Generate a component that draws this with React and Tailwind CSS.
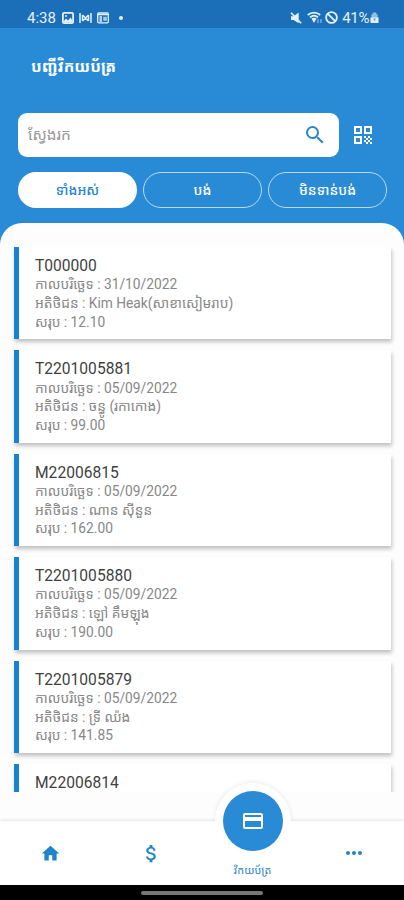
import React from 'react';
import { MdSearch, MdQrCode, MdHome, MdAttachMoney, MdPayment, MdMoreHoriz } from 'react-icons/md';

const invoices = [
  { id: 'T000000', date: '31/10/2022', customer: 'Kim Heak(សាខាសៀមរាប)', total: '12.10' },
  { id: 'T2201005881', date: '05/09/2022', customer: 'ចន្ធូ (រកាកោង)', total: '99.00' },
  { id: 'M22006815', date: '05/09/2022', customer: 'ណាន ស៊ីនួន', total: '162.00' },
  { id: 'T2201005880', date: '05/09/2022', customer: 'ឡៅ គឹមឡុង', total: '190.00' },
  { id: 'T2201005879', date: '05/09/2022', customer: 'ទ្រី ឈ៉ង', total: '141.85' },
  { id: 'M22006814' },
]

const StatusBar = () => (
  <div className="flex h-7 items-center bg-[#1a6fb8] pt-[7px] pr-[25px] pl-[27px] text-[#e4f1fb]">
    <span className="text-[15px] leading-5">4:38</span>
    <svg className="ml-[6px]" width="12" height="12" viewBox="0 0 12 12" fill="none" stroke="currentColor" strokeWidth="1.8">
      <rect x="0.9" y="0.9" width="10.2" height="10.2" rx="1.2" />
      <path d="M1.5 9.5l2.5-3 2 2 2.5-3 2 3v2h-9z" fill="currentColor" stroke="none" />
      <path d="M3 4h2" strokeWidth="1.3" />
    </svg>
    <svg className="ml-[5px]" width="13" height="12" viewBox="0 0 13 12" fill="none" stroke="currentColor" strokeWidth="1.5">
      <path d="M1 1v10M12 1v10M3.5 3v6M9.5 3v6M3.5 3l3 3 3-3M3.5 9l3-3 3 3" />
    </svg>
    <svg className="ml-[5px]" width="12" height="12" viewBox="0 0 12 12" fill="none" stroke="currentColor" strokeWidth="1.3">
      <rect x="0.7" y="1" width="10.6" height="9.8" rx="1" />
      <path d="M1 2.6h10M2.5 5h2.5M2.5 7h2.5M2.5 9h2.5" />
      <path d="M6.3 4.8h3.5v4H6.3z" fill="currentColor" stroke="none" opacity="0.7" />
    </svg>
    <div className="ml-[10px] h-1 w-1 rounded-full bg-[#e4f1fb]" />
    <svg className="ml-auto" width="12" height="12" viewBox="0 0 12 12" fill="currentColor">
      <path d="M1 4.2h2.7L8.7 0.5v10.8L3.7 8H1z" />
      <path d="M1 0.8l10.2 10.4" stroke="currentColor" strokeWidth="1.6" />
    </svg>
    <svg className="ml-[5px]" width="16" height="13" viewBox="0 0 16 13" fill="none" stroke="currentColor">
      <path d="M0.8 4C4.3 0.8 9.7 0.8 13.2 4" strokeWidth="1.8" />
      <path d="M3 6.4c2.4-2.2 5.6-2.2 8 0" strokeWidth="1.7" />
      <path d="M4.4 7.6L7 12l2.6-4.4C8 6.6 6 6.6 4.4 7.6z" fill="currentColor" stroke="none" />
      <path d="M11 8.2v4M14 12V8" strokeWidth="1.2" opacity="0.6" />
    </svg>
    <svg className="ml-[2px]" width="13" height="13" viewBox="0 0 13 13" fill="none" stroke="currentColor" strokeWidth="1.8">
      <circle cx="6.5" cy="6.5" r="5.4" />
      <path d="M2.8 2.8l7.4 7.4" />
    </svg>
    <span className="ml-[4px] text-[15px] leading-5 tracking-tight">41%</span>
    <svg className="ml-px" width="9" height="13" viewBox="0 0 10 13" fill="currentColor">
      <path d="M3 3V1h4v2h1.5v9.5h-7V3z" opacity="0.6" />
      <path d="M0.5 6.5h9v6h-9z" />
      <path d="M4 7.5h2v2.5H4z" fill="#6f9fc9" />
    </svg>
  </div>
)

const InvoiceCard = ({ item }) => (
  <div className="h-[92.4px] shrink-0 border-l-[5px] border-[#1583cf] bg-white pt-[9px] pl-4 shadow-[1px_3px_4px_rgba(0,0,0,0.24)]">
    <h2 className="h-[19.3px] text-[15.6px] leading-[20px] text-[#3f3f3f]">{item.id}</h2>
    {item.date && (
      <>
        <p className="h-[18.7px] text-[13.75px] leading-[19px] whitespace-nowrap">កាលបរិច្ឆេទ : {item.date}</p>
        <p className="h-[18.7px] text-[13.75px] leading-[19px] whitespace-nowrap">អតិថិជន : {item.customer}</p>
        <p className="h-[18.7px] text-[13.75px] leading-[19px] whitespace-nowrap">សរុប : {item.total}</p>
      </>
    )}
  </div>
)

const BottomNav = () => (
  <div className="relative flex h-[64px] bg-white text-[#1f84cc] shadow-[0_-1px_3px_rgba(0,0,0,0.1)]">
    <div className="absolute -top-[38px] left-[215px] h-[76px] w-[76px] rounded-full bg-white shadow-[0_-1px_5px_rgba(0,0,0,0.08)]" />
    <div className="absolute top-0 left-[200px] h-[64px] w-[106px] bg-white" />
    <div className="relative flex w-[101px] items-center justify-center"><MdHome size={21} /></div>
    <div className="relative flex w-[101px] items-center justify-center"><MdAttachMoney size={23} /></div>
    <div className="relative flex w-[101px] flex-col items-center">
      <div className="-mt-[30px] flex h-[60px] w-[60px] shrink-0 items-center justify-center rounded-full bg-[#298bd5] text-white">
        <MdPayment size={24} />
      </div>
      <span className="mt-[12px] text-[10.8px] leading-4 whitespace-nowrap">វិកយប័ត្រ</span>
    </div>
    <div className="relative flex w-[101px] items-center justify-center"><MdMoreHoriz size={24} /></div>
  </div>
)

const App = () => {
  return (
    <div className="flex h-[900px] w-[404px] flex-col overflow-hidden bg-[#298bd5] font-[Roboto,'Noto_Sans_Khmer','Khmer_OS',sans-serif]">
      <StatusBar />
      <h1 className="mt-[27px] ml-[31px] h-6 text-[15.8px] leading-6 font-bold whitespace-nowrap text-white">បញ្ជីវិកយប័ត្រ</h1>
      <div className="mt-[34px] ml-[18px] flex items-center">
        <div className="flex h-[44px] w-[321px] items-center justify-between rounded-[9px] bg-white pr-3 pl-[10px]">
          <span className="text-[15.4px] leading-5 text-[#999999]">ស្វែងរក</span>
          <MdSearch size={24} className="text-[#2f84c6]" />
        </div>
        <MdQrCode size={24} className="ml-3 text-white" />
      </div>
      <div className="mt-[15px] ml-[18px] flex gap-[6px] text-[13.7px] font-medium text-white">
        <div className="flex h-9 w-[119px] items-center justify-center rounded-full bg-white text-[#1f84cc]">ទាំងអស់</div>
        <div className="flex h-9 w-[119px] items-center justify-center rounded-full border border-[#b5dcf6]">បង់</div>
        <div className="flex h-9 w-[119px] items-center justify-center rounded-full border border-[#b5dcf6]">មិនទាន់បង់</div>
      </div>
      <div className="mt-[15px] flex min-h-0 flex-1 flex-col rounded-t-[22px] bg-[#fdfdfd] pt-6">
        <div className="flex h-[545px] shrink-0 flex-col gap-[11px] overflow-hidden pr-[13px] pl-[14px] text-[#878787]">
          {invoices.map((item) => <InvoiceCard key={item.id} item={item} />)}
        </div>
      </div>
      <BottomNav />
      <div className="flex h-[15px] shrink-0 justify-center bg-black pt-[6px]">
        <div className="h-1 w-[122px] rounded-full bg-[#777777]" />
      </div>
    </div>
  )
}

export default App
